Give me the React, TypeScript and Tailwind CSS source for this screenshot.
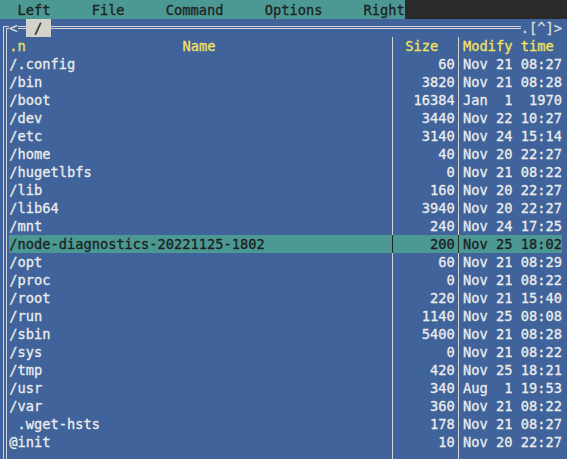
import React from "react";

type Row = { name: string; size: string; time: string; sel?: boolean };

const rows: Row[] = [
  { name: "/.config", size: "60", time: "Nov 21 08:27" },
  { name: "/bin", size: "3820", time: "Nov 21 08:28" },
  { name: "/boot", size: "16384", time: "Jan  1  1970" },
  { name: "/dev", size: "3440", time: "Nov 22 10:27" },
  { name: "/etc", size: "3140", time: "Nov 24 15:14" },
  { name: "/home", size: "40", time: "Nov 20 22:27" },
  { name: "/hugetlbfs", size: "0", time: "Nov 21 08:22" },
  { name: "/lib", size: "160", time: "Nov 20 22:27" },
  { name: "/lib64", size: "3940", time: "Nov 20 22:27" },
  { name: "/mnt", size: "240", time: "Nov 24 17:25" },
  { name: "/node-diagnostics-20221125-1802", size: "200", time: "Nov 25 18:02", sel: true },
  { name: "/opt", size: "60", time: "Nov 21 08:29" },
  { name: "/proc", size: "0", time: "Nov 21 08:22" },
  { name: "/root", size: "220", time: "Nov 21 15:40" },
  { name: "/run", size: "1140", time: "Nov 25 08:08" },
  { name: "/sbin", size: "5400", time: "Nov 21 08:28" },
  { name: "/sys", size: "0", time: "Nov 21 08:22" },
  { name: "/tmp", size: "420", time: "Nov 25 18:21" },
  { name: "/usr", size: "340", time: "Aug  1 19:53" },
  { name: "/var", size: "360", time: "Nov 21 08:22" },
  { name: " .wget-hsts", size: "178", time: "Nov 21 08:27" },
  { name: "@init", size: "10", time: "Nov 20 22:27" },
];

function Sep({ dark }: { dark?: boolean }) {
  return (
    <div className="w-[8.25px] h-full flex justify-center shrink-0">
      <div className={dark ? "w-px h-full bg-[#1c2a2a]" : "w-px h-full bg-[#d4d4d4]"} />
    </div>
  );
}

export default function App() {
  return (
    <div
      className="w-[567px] h-[459px] overflow-hidden bg-[#3f639a] flex flex-col text-[13.7px] leading-[18px] text-[#ececec] [-webkit-text-stroke:0.3px_currentColor]"
      style={{ fontFamily: "'DejaVu Sans Mono', 'Liberation Mono', monospace" }}
    >
      {/* menu bar */}
      <div className="flex h-[19px] shrink-0">
        <div className="w-[405px] bg-[#4c9993] text-[#1e2222] whitespace-pre pt-px pl-px">
          {"  Left     File     Command     Options     Right"}
        </div>
        <div className="flex-1 bg-[#2a2a2a]" />
      </div>

      {/* top border */}
      <div className="flex h-[18px] shrink-0">
        <div className="w-[9.25px] shrink-0">
          <div className="ml-[3px] mt-[7px] h-[11px] border-l-[4px] border-t-[3px] border-double border-[#d4d4d4]" />
        </div>
        <div className="w-[8.25px] shrink-0 whitespace-pre text-[#dcdcdc]">{"<"}</div>
        <div className="w-[8.25px] shrink-0">
          <div className="mt-[7px] border-t-[3px] border-double border-[#d4d4d4]" />
        </div>
        <div className="w-[24.75px] shrink-0 bg-[#d3d3cb] text-[#222] whitespace-pre">{" / "}</div>
        <div className="w-[470.25px] shrink-0">
          <div className="mt-[7px] border-t-[3px] border-double border-[#d4d4d4]" />
        </div>
        <div className="whitespace-pre text-[#dcdcdc]">{".[^]>"}</div>
      </div>

      {/* body */}
      <div className="flex-1 ml-[3px] border-l-[4px] border-double border-[#d4d4d4] pl-[2.25px] flex flex-col">
        {/* header */}
        <div className="flex h-[18px] w-[552.75px] text-[#f2e25e] whitespace-pre">
          <div className="w-[379.5px] shrink-0 relative">
            <span>.n</span>
            <span className="absolute left-[173.25px] top-0">Name</span>
          </div>
          <Sep />
          <div className="w-[57.75px] shrink-0">{" Size"}</div>
          <Sep />
          <div className="w-[99px] shrink-0">Modify time</div>
        </div>
        {rows.map((r) => (
          <div
            key={r.name}
            className={
              r.sel
                ? "flex h-[18px] w-[552.75px] whitespace-pre bg-[#4c9993] text-[#1c2222]"
                : "flex h-[18px] w-[552.75px] whitespace-pre"
            }
          >
            <div className="w-[379.5px] shrink-0 overflow-hidden">{r.name}</div>
            <Sep dark={r.sel} />
            <div className="w-[57.75px] shrink-0 text-right">{r.size}</div>
            <Sep dark={r.sel} />
            <div className="w-[99px] shrink-0">{r.time}</div>
          </div>
        ))}
        <div className="flex flex-1 w-[552.75px]">
          <div className="w-[379.5px] shrink-0" />
          <Sep />
          <div className="w-[57.75px] shrink-0" />
          <Sep />
        </div>
      </div>
    </div>
  );
}
